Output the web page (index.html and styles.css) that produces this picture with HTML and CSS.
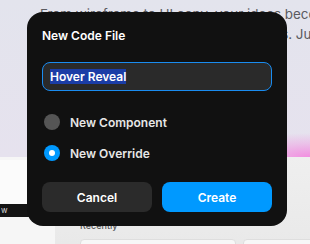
FILE: index.html
```html
<!DOCTYPE html>
<html lang="en">
<head>
    <meta charset="UTF-8">
    <meta name="viewport" content="width=device-width, initial-scale=1.0">
    <title>New Code File</title>
    <link rel="stylesheet" href="styles.css">
</head>
<body>
    <div class="page">
        <section class="hero">
            <p class="hero-line">From wireframe to UI copy, your ideas become reality</p>
            <p class="hero-line">Make clean sites and pages in seconds. Just ask</p>
        </section>
        <div class="lower">
            <aside class="sidebar">
                <div class="side-card"></div>
            </aside>
            <main class="main">
                <h3 class="recent-title">Recently</h3>
                <div class="cards">
                    <div class="card"></div>
                    <div class="card"></div>
                </div>
            </main>
        </div>
        <div class="tooltip">w</div>
    </div>

    <div class="dialog">
        <h2 class="dialog-title">New Code File</h2>
        <div class="field">
            <span class="selected">Hover Reveal</span>
        </div>
        <div class="options">
            <label class="option">
                <span class="radio"></span>
                New Component
            </label>
            <label class="option">
                <span class="radio checked"></span>
                New Override
            </label>
        </div>
        <div class="actions">
            <button class="btn btn-cancel">Cancel</button>
            <button class="btn btn-create">Create</button>
        </div>
    </div>
</body>
</html>
```

FILE: styles.css
```css
html, body {
    margin: 0;
    height: 100%;
}
body {
    font-family: Inter, "Noto Sans", sans-serif;
    background-color: #ececec;
    overflow: hidden;
}
.page {
    height: 100%;
    display: flex;
    flex-direction: column;
    overflow: hidden;
}
.hero {
    height: 157px;
    flex-shrink: 0;
    padding: 4px 0 0 40px;
    box-sizing: border-box;
    overflow: hidden;
    background:
        radial-gradient(ellipse 90px 24px at 100% 100%, #f28ee0 0%, rgba(242, 142, 224, 0.4) 55%, rgba(242, 142, 224, 0) 100%),
        linear-gradient(180deg, #e3e4ed 0%, #e6e2ee 100%);
}
.hero-line {
    margin: 0;
    font-size: 13.4px;
    line-height: 20px;
    color: #5a5a5f;
    white-space: nowrap;
}
.lower {
    flex: 1;
    display: flex;
    min-height: 0;
}
.sidebar {
    width: 55px;
    flex-shrink: 0;
    background-color: #f6f6f6;
    padding-top: 3px;
}
.side-card {
    height: 44px;
    background-color: #fbfbfb;
}
.main {
    flex: 1;
    min-width: 0;
    overflow: hidden;
    padding: 63px 0 0 25px;
    background: linear-gradient(180deg, #efefef 0%, #e9e9e9 100%);
}
.recent-title {
    margin: 0;
    font-size: 9px;
    font-weight: 500;
    color: #555;
    line-height: 11px;
}
.cards {
    display: flex;
    gap: 7px;
    margin-top: 8px;
}
.card {
    width: 154px;
    flex-shrink: 0;
    height: 20px;
    background-color: #f7f7f7;
    border: 1px solid #dedede;
    border-radius: 4px;
}
.tooltip {
    position: absolute;
    left: 0;
    top: 204px;
    width: 32px;
    height: 13px;
    background-color: #141414;
    color: #ddd;
    font-size: 8px;
    line-height: 13px;
    padding-left: 1px;
}

/* dialog */
.dialog {
    position: absolute;
    left: 27px;
    top: 12px;
    width: 260px;
    box-sizing: border-box;
    padding: 16px 15px 14px;
    background-color: #111111;
    border-radius: 16px;
    color: #ffffff;
}
.dialog-title {
    margin: 0;
    font-size: 12px;
    font-weight: 600;
    line-height: 16px;
}
.field {
    margin-top: 18px;
    height: 29px;
    box-sizing: border-box;
    border: 1px solid #1a8cf0;
    border-radius: 8px;
    background-color: #2a2a2a;
    padding-left: 7px;
    display: flex;
    align-items: center;
}
.selected {
    background-color: #1b3da6;
    font-size: 12px;
    font-weight: 600;
    line-height: 15px;
}
.options {
    margin-top: 23px;
    display: flex;
    flex-direction: column;
    gap: 15px;
}
.option {
    display: flex;
    align-items: center;
    gap: 10px;
    height: 16px;
    font-size: 12px;
    font-weight: 600;
    color: #e6e6e6;
}
.radio {
    width: 16px;
    height: 16px;
    margin-left: 2px;
    border-radius: 50%;
    background-color: #555555;
    display: flex;
    align-items: center;
    justify-content: center;
}
.radio.checked {
    background-color: #0099ff;
}
.radio.checked::after {
    content: "";
    width: 6px;
    height: 6px;
    border-radius: 50%;
    background-color: #ffffff;
}
.actions {
    margin-top: 21px;
    display: flex;
    gap: 10px;
}
.btn {
    flex: 1;
    height: 30px;
    border: none;
    border-radius: 8px;
    font-family: inherit;
    font-size: 12px;
    font-weight: 600;
    color: #ffffff;
}
.btn-cancel {
    background-color: #2b2b2b;
}
.btn-create {
    background-color: #0099ff;
}
```
